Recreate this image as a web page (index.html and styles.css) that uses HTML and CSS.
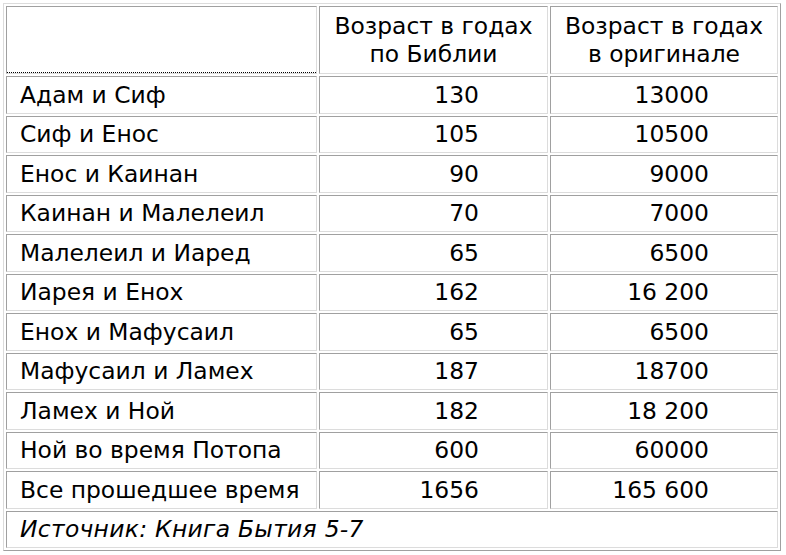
FILE: index.html
```
<!DOCTYPE html>
<html lang="ru">
<head>
<meta charset="utf-8">
<title>Возраст в годах</title>
<link rel="stylesheet" href="styles.css">
</head>
<body>
<table class="ages">
  <thead>
    <tr class="head-row">
      <th class="c-name corner"></th>
      <th class="c-bible">Возраст в годах<br>по Библии</th>
      <th class="c-orig">Возраст в годах<br>в оригинале</th>
    </tr>
  </thead>
  <tbody>
    <tr><td class="name">Адам и Сиф</td><td class="num">130</td><td class="num">13000</td></tr>
    <tr><td class="name">Сиф и Енос</td><td class="num">105</td><td class="num">10500</td></tr>
    <tr><td class="name">Енос и Каинан</td><td class="num">90</td><td class="num">9000</td></tr>
    <tr><td class="name">Каинан и Малелеил</td><td class="num">70</td><td class="num">7000</td></tr>
    <tr><td class="name">Малелеил и Иаред</td><td class="num">65</td><td class="num">6500</td></tr>
    <tr><td class="name">Иарея и Енох</td><td class="num">162</td><td class="num">16 200</td></tr>
    <tr><td class="name">Енох и Мафусаил</td><td class="num">65</td><td class="num">6500</td></tr>
    <tr><td class="name">Мафусаил и Ламех</td><td class="num">187</td><td class="num">18700</td></tr>
    <tr><td class="name">Ламех и Ной</td><td class="num">182</td><td class="num">18 200</td></tr>
    <tr><td class="name">Ной во время Потопа</td><td class="num">600</td><td class="num">60000</td></tr>
    <tr><td class="name">Все прошедшее время</td><td class="num">1656</td><td class="num">165 600</td></tr>
    <tr><td class="source" colspan="3">Источник: Книга Бытия 5-7</td></tr>
  </tbody>
</table>
</body>
</html>
```
FILE: styles.css
```
html, body {
  background: #ffffff;
}
body {
  margin: 3px;
  font-family: "DejaVu Sans", Verdana, sans-serif;
  font-size: 23.4px;
  color: #000000;
}
.ages {
  width: 778px;
  table-layout: fixed;
  border-collapse: separate;
  border-spacing: 2px;
  border: 1px solid;
  border-color: #dcdcdc #a0a0a0 #a0a0a0 #dcdcdc;
}
.ages th,
.ages td {
  box-sizing: border-box;
  border: 1px solid;
  border-color: #a0a0a0 #dcdcdc #dcdcdc #a0a0a0;
  line-height: 28px;
  padding: 4px 13px;
  font-weight: normal;
}
.ages td {
  height: 37.5px;
  padding-top: 3px;
  padding-bottom: 3px;
}
.c-name { width: 311px; }
.c-bible { width: 229px; }
.c-orig { width: 228px; }
.ages .head-row th {
  height: 68px;
  text-align: center;
  padding: 5px 2px;
}
.ages .corner {
  background: repeating-linear-gradient(to right, #000 0 1px, transparent 1px 2px) left bottom / 100% 1px no-repeat;
}
.ages td.name {
  text-align: left;
}
.ages td.num {
  text-align: right;
  padding-right: 68px;
}
.ages td.source {
  font-style: italic;
  text-align: left;
  letter-spacing: 0.3px;
}
```
